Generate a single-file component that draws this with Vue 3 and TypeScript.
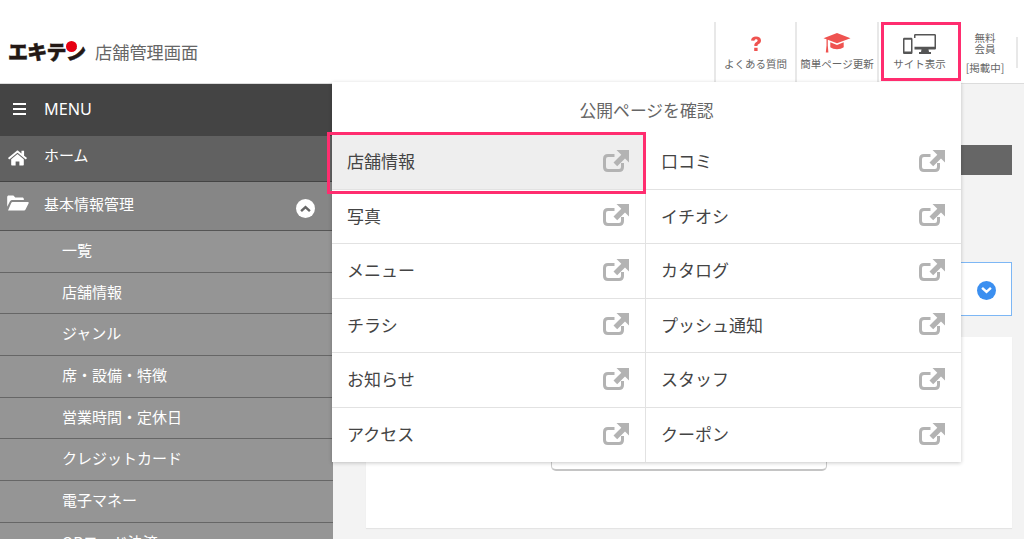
<script setup lang="ts">
const subItems: string[] = [
  '一覧', '店舗情報', 'ジャンル', '席・設備・特徴', '営業時間・定休日', 'クレジットカード', '電子マネー', 'QRコード決済',
]
const links: string[] = [
  '店舗情報', '口コミ', '写真', 'イチオシ', 'メニュー', 'カタログ', 'チラシ', 'プッシュ通知', 'お知らせ', 'スタッフ', 'アクセス', 'クーポン',
]
</script>

<template>
  <div class="page">
    <header class="top">
      <div class="brand">
        <span class="logo">エキテ<span class="logo-n">ン<i class="dot"></i></span></span>
        <span class="brand-sub">店舗管理画面</span>
      </div>
      <nav class="tabs">
        <a class="tab tab-faq">
          <svg class="ic-q" viewBox="0 0 12 16"><path fill="#ef5350" d="M1 4.600C1.200 2 3.300.5 6 .5c2.900 0 5 1.500 5 3.900 0 1.900-1 2.800-2.300 3.600-1 .6-1.200 1-1.200 1.900H4.300c0-1.900.5-2.800 1.700-3.600.9-.6 1.600-1 1.600-1.800 0-.7-.6-1.200-1.500-1.200-1 0-1.600.6-1.700 1.500zM4.200 11.700h3.400V15H4.200z"/></svg>
          <span>よくある質問</span>
        </a>
        <a class="tab tab-guide">
          <svg class="ic-cap" viewBox="0 0 28 20"><path fill="#ef5350" d="M14 0 .5 5.200l3 1.100V12.500L2.800 19.500h2.600L4.800 12.500V6.800L14 10.300l13.500-5.100zM7.300 9.300v5c1.700 1.300 4 2 6.700 2s5-.7 6.700-2v-5L14 11.900z"/></svg>
          <span>簡単ページ更新</span>
        </a>
        <a class="tab tab-site">
          <svg class="ic-dev" viewBox="0 0 33 20">
            <path fill="#555" d="M11 1.300C11 .6 11.600 0 12.300 0h19.400C32.400 0 33 .6 33 1.300v12.900c0 .7-.6 1.300-1.300 1.300h-6.200l.5 2.600H28V20H16v-1.900h2l.5-2.600h-7v-2.700h20V1.600h-19V4H11z"/>
            <path fill="#555" d="M1.300 3.800h6.900c.7 0 1.300.6 1.300 1.300v13.600c0 .7-.6 1.300-1.300 1.300H1.300C.6 20 0 19.400 0 18.700V5.100c0-.7.6-1.300 1.300-1.300zM1.500 5.700v11.700h6.500V5.700z"/>
          </svg>
          <span>サイト表示</span>
        </a>
        <a class="tab-plan">
          <span class="plan-name">無料<br />会員</span>
          <span class="plan-state">[掲載中]</span>
        </a>
      </nav>
    </header>

    <div class="body">
      <aside class="side">
        <div class="menu-head">
          <span class="burger"><i></i><i></i><i></i></span>
          <span>MENU</span>
        </div>
        <div class="side-row home">
          <svg class="ic-home" viewBox="0 0 20 17"><path fill="#fff" d="M10 4.300 3.300 9.800v5.900c0 .4.300.7.700.7h4v-4.300h4v4.300h4c.4 0 .7-.3.7-.7V9.800zM19.800 8.300 17 6V1.300c0-.2-.2-.4-.4-.4h-2c-.2 0-.4.200-.4.400v2.400L11 1c-.6-.5-1.500-.5-2 0L.2 8.300c-.2.100-.2.400 0 .6l.8 1c.1.200.4.200.6 0L10 3l8.400 6.900c.2.200.5.200.6 0l.8-1c.2-.2.200-.5 0-.6z"/></svg>
          <span>ホーム</span>
        </div>
        <div class="side-row basic">
          <svg class="ic-folder" viewBox="0 0 23 17"><path fill="#fff" d="M0 12.500V2c0-.9.700-1.600 1.600-1.600h5l2 2.200h7.500c.9 0 1.600.7 1.600 1.600v1H5.500c-1.100 0-2 .6-2.500 1.500zM.9 16.500l3.400-8c.3-.6.800-1 1.500-1H22c.7 0 1.100.7.800 1.300l-3.300 6.700c-.3.600-.9 1-1.500 1z"/></svg>
          <span>基本情報管理</span>
          <span class="round-chev">
            <svg viewBox="0 0 10 7"><path fill="none" stroke="#666" stroke-width="2.200" d="M1 5.500 5 1.800l4 3.700"/></svg>
          </span>
        </div>
        <div v-for="item in subItems" :key="item" class="sub-row">{{ item }}</div>
      </aside>

      <main class="main">
        <div class="bar"></div>
        <div class="select-box">
          <span class="blue-chev">
            <svg viewBox="0 0 10 7"><path fill="none" stroke="#fff" stroke-width="2.200" d="M1 1.500 5 5.200l4-3.700"/></svg>
          </span>
        </div>
        <section class="card">
          <div class="card-btn"></div>
        </section>
      </main>
    </div>

    <div class="pop">
      <div class="pop-title">公開ページを確認</div>
      <div class="pop-grid">
        <a v-for="(l, i) in links" :key="l" class="pop-cell" :class="{ active: i === 0 }">
          <span>{{ l }}</span>
          <svg class="ic-ext" viewBox="0 0 26 22"><path fill="none" stroke="#b3b3b3" stroke-width="3" stroke-linejoin="round" d="M11.500 5.500H5C2.900 5.500 1.500 6.900 1.500 9v8c0 2.100 1.400 3.500 3.500 3.500h11c2.100 0 3.500-1.400 3.500-3.500v-4"/><path fill="#b3b3b3" d="M13.500 0H26v12.500l-4-4.100-7.800 7.800-3.700-3.700 7.800-7.800z"/></svg>
        </a>
      </div>
      <div class="pink-row"></div>
    </div>
    <div class="pink-tab"></div>
  </div>
</template>

<style>
html, body { margin: 0; padding: 0; background: #fff; }
</style>

<style scoped>
.page {
  position: relative;
  width: 1024px;
  height: 539px;
  overflow: hidden;
  background: #f3f3f3;
  font-family: "Noto Sans CJK JP", "Noto Sans", sans-serif;
  color: #555;
}
.top {
  height: 84px;
  box-sizing: border-box;
  background: #fff;
  border-bottom: 1px solid #dcdcdc;
  display: flex;
  align-items: flex-start;
  justify-content: space-between;
}
.brand { display: flex; align-items: center; margin-top: 37px; padding-left: 8px; height: 30px; }
.logo {
  font-size: 20px;
  font-weight: 900;
  color: #231815;
  -webkit-text-stroke: 0.5px #231815;
  width: 77px;
  letter-spacing: -0.7px;
  line-height: 30px;
  white-space: nowrap;
}
.logo-n { position: relative; display: inline-block; }
.dot {
  position: absolute;
  left: 0;
  top: 4px;
  width: 11px;
  height: 11px;
  border-radius: 50%;
  background: #e60012;
}
.brand-sub { margin-left: 10px; font-size: 17.200px; color: #666; line-height: 30px; white-space: nowrap; }
.tabs { display: flex; margin-top: 22px; height: 60px; margin-right: 6px; }
.tab {
  box-sizing: border-box;
  width: 81px;
  border-left: 2px solid #e8e8e8;
  display: flex;
  flex-direction: column;
  align-items: center;
  font-size: 10.500px;
  color: #666;
  line-height: 14px;
  white-space: nowrap;
}
.tab span { margin-top: 5px; }
.tab-guide { width: 82px; }
.tab-site { width: 83px; }
.ic-q { width: 12px; height: 16px; margin-top: 14px; }
.ic-cap { width: 28px; height: 20px; margin-top: 11px; }
.tab-guide span { margin-top: 4px; }
.ic-dev { width: 33px; height: 20px; margin-top: 12px; }
.tab-site span { margin-top: 3px; }
.tab-plan {
  width: 58px;
  box-sizing: border-box;
  border-right: 2px solid #e8e8e8;
  padding-right: 6px;
  margin: 15px 0 0 0;
  height: 31px;
  display: flex;
  flex-direction: column;
  align-items: center;
  font-size: 10.500px;
  line-height: 11px;
  color: #666;
}
.plan-name { margin-top: -5px; text-align: center; }
.plan-state { margin-top: 8px; white-space: nowrap; }
.body { display: flex; height: 455px; }
.side { width: 333px; flex: none; overflow: hidden; background: #959595; color: #fff; font-size: 15px; }
.menu-head {
  height: 52px;
  background: #444;
  display: flex;
  align-items: center;
  padding: 0 0 2px 13px;
  box-sizing: border-box;
  font-size: 16.200px;
  gap: 18px;
  font-family: "Noto Sans", "Noto Sans CJK JP", sans-serif;
}
.burger { display: flex; flex-direction: column; gap: 2.500px; width: 13px; }
.burger i { height: 2.500px; background: #fff; display: block; }
.side-row { display: flex; align-items: center; box-sizing: border-box; position: relative; padding-left: 44px; }
.side-row span { line-height: 20px; }
.home { height: 46px; background: #616161; border-bottom: 1px solid #444; padding-bottom: 7px; }
.ic-home { position: absolute; left: 8px; top: 14px; width: 19px; height: 16px; }
.basic { height: 49px; background: #868686; border-bottom: 1px solid #555; padding-bottom: 5px; }
.ic-folder { position: absolute; left: 7px; top: 13px; width: 22px; height: 16px; }
.round-chev {
  position: absolute;
  right: 18px;
  top: 17px;
  width: 19px;
  height: 19px;
  background: #fff;
  border-radius: 50%;
  display: flex;
  align-items: center;
  justify-content: center;
}
.round-chev svg { width: 11px; height: 8px; }
.sub-row {
  height: 41.700px;
  box-sizing: border-box;
  border-bottom: 1px solid #666;
  padding-left: 62px;
  line-height: 38px;
  white-space: nowrap;
}
.main { flex: 1; padding: 61px 12px 0 33px; min-width: 0; }
.bar { height: 30px; background: #666; }
.select-box {
  margin-top: 87px;
  height: 54px;
  box-sizing: border-box;
  background: #fff;
  border: 1.500px solid #7db7f5;
  display: flex;
  align-items: center;
  justify-content: flex-end;
  padding-right: 15.500px;
}
.blue-chev {
  width: 19px;
  height: 19px;
  margin-top: 2px;
  border-radius: 50%;
  background: #3b8ff0;
  display: flex;
  align-items: center;
  justify-content: center;
}
.blue-chev svg { width: 11px; height: 8px; }
.card {
  margin-top: 21px;
  height: 191px;
  background: #fff;
  box-shadow: 0 1px 1px rgba(0, 0, 0, 0.06);
  display: flex;
  justify-content: center;
}
.card-btn {
  margin-top: 100px;
  width: 276px;
  height: 34px;
  box-sizing: border-box;
  border: 1px solid #ccc;
  border-bottom: 2px solid #c4c4c4;
  border-radius: 5px;
  background: #fff;
}
.pop {
  position: absolute;
  left: 332px;
  top: 82px;
  width: 629px;
  height: 380px;
  background: #fff;
  box-shadow: 0 1px 4px rgba(0, 0, 0, 0.22);
}
.pop-title {
  height: 53px;
  line-height: 56px;
  text-align: center;
  font-size: 16.800px;
  color: #666;
}
.pop-grid { display: grid; grid-template-columns: 314px 315px; grid-auto-rows: 54.500px; }
.pop-cell {
  display: flex;
  align-items: center;
  justify-content: space-between;
  box-sizing: border-box;
  padding: 0 16px 2px 15px;
  font-size: 17px;
  color: #444;
  border-bottom: 1px solid #e2e2e2;
}
.pop-cell:nth-child(odd) { border-right: 1px solid #e2e2e2; }
.pop-cell:nth-last-child(-n + 2) { border-bottom: 0; }
.pop-cell.active { background: #eee; }
.ic-ext { width: 26px; height: 22px; flex: none; }
.pink-row {
  position: absolute;
  left: -5px;
  top: 50px;
  width: 319px;
  height: 62px;
  box-sizing: border-box;
  border: 3px solid #ff2d6f;
}
.pink-tab {
  position: absolute;
  left: 881px;
  top: 22px;
  width: 80px;
  height: 59px;
  box-sizing: border-box;
  border: 3px solid #ff2d6f;
}
</style>
